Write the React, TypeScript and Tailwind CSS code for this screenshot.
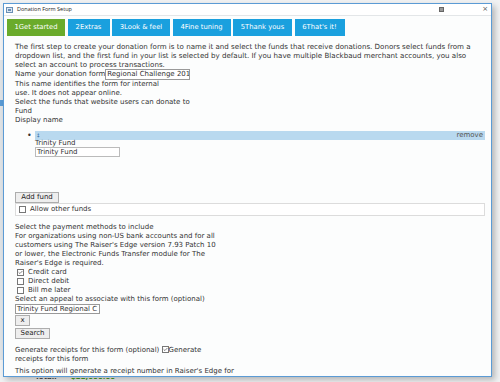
import { Check } from "lucide-react";

const tabs = [
  { label: "1Get started", w: "w-[58px]", active: true },
  { label: "2Extras", w: "w-[42px]" },
  { label: "3Look & feel", w: "w-[58px]" },
  { label: "4Fine tuning", w: "w-[58px]" },
  { label: "5Thank yous", w: "w-[59px]" },
  { label: "6That's it!", w: "w-[50px]" },
];

function Box({ checked }: { checked?: boolean }) {
  return (
    <span className="inline-flex h-[7px] w-[7px] shrink-0 items-center justify-center border border-[#777] bg-white">
      {checked && <Check size={7} strokeWidth={3} className="text-[#333]" />}
    </span>
  );
}

function Btn({ children, w }: { children: string; w: string }) {
  return (
    <div className={`flex h-[11px] ${w} items-center justify-center border border-[#adadad] bg-[#eeeeee] text-[#222]`}>
      {children}
    </div>
  );
}

export default function App() {
  return (
    <div className="relative h-[382px] w-[500px] overflow-hidden bg-[#f1f2f3] font-['DejaVu_Sans',sans-serif]">
      {/* page behind the dialog */}
      <div className="absolute left-0 top-[60px] h-[300px] w-[3px] bg-[#dfe3e6]" />
      <div className="absolute left-0 top-[100px] h-[6px] w-[3px] bg-[#5a9bd5]" />
      <div className="absolute left-0 top-[378px] flex h-[4px] w-[200px] overflow-hidden">
        <div className="-mt-[5px] flex gap-[14px] pl-[35px] text-[7px] font-bold leading-[9px]">
          <span className="text-[#444]">Total:</span>
          <span className="text-[#4a9a22]">$22,000.00</span>
        </div>
      </div>

      {/* dialog */}
      <div className="absolute left-[3px] top-[3px] flex h-[374px] w-[489px] flex-col border border-[#5b9bd5] bg-[#fcfdfd] shadow-[3px_3px_6px_rgba(0,0,0,0.25)]">
        <div className="flex h-[12px] shrink-0 items-center border-b border-[#e3e6e8] bg-white pl-[2px] pr-[3px]">
          <span className="mr-[4px] flex h-[6px] w-[7px] flex-col justify-between border border-[#6b8fb5] bg-[#dbe7f3] p-[1px]">
            <span className="h-px bg-[#6b8fb5]" />
            <span className="h-px bg-[#6b8fb5]" />
          </span>
          <span className="font-['Open_Sans',sans-serif] text-[5.5px] text-[#222]">Donation Form Setup</span>
          <span className="ml-auto mr-[38px] h-[5px] w-[5px] border border-[#666] bg-[#999]" />
          <span className="text-[7px] leading-none text-[#555]">×</span>
        </div>

        <div className="flex-1 overflow-hidden pl-[3px] text-[7px] leading-[9px] text-[#333]">
          <div className="mt-[3px] flex gap-[2.5px]">
            {tabs.map((t) => (
              <div
                key={t.label}
                className={`flex h-[17px] ${t.w} items-center justify-center text-[6.8px] text-white ${t.active ? "bg-[#6aab2b]" : "bg-[#1aa0de]"}`}
              >
                {t.label}
              </div>
            ))}
          </div>

          <div className="pl-[8px] pr-[6px]">
            <p className="mt-[6px] w-[456px] text-[7.1px]">
              The first step to create your donation form is to name it and select the funds that receive donations. Donors select funds from a dropdown list, and the first fund in your list is selected by default. If you have multiple Blackbaud merchant accounts, you also select an account to process transactions.
            </p>
            <div className="flex items-center">
              <span>Name your donation form</span>
              <span className="flex h-[11px] w-[85px] items-center overflow-hidden whitespace-nowrap border border-[#999] bg-white pl-[1px]">Regional Challenge 201</span>
            </div>
            <p className="w-[150px]">This name identifies the form for internal use. It does not appear online.</p>
            <div>Select the funds that website users can donate to</div>
            <div>Fund</div>
            <div>Display name</div>

            <div className="mt-[6px] flex items-center">
              <span className="w-[20px] pl-[12px] text-[8px]">•</span>
              <div className="flex h-[9px] flex-1 items-center justify-between bg-[#b9d9ef] pl-[2px] pr-[2px] text-[#555]">
                <span className="text-[5px] text-[#2b5f9a]">‡</span>
                <span>remove</span>
              </div>
            </div>
            <div className="pl-[20px]">
              <div className="-mt-[1px] leading-[8px]">Trinity Fund</div>
              <div className="flex h-[10px] w-[85px] items-center border border-[#bbb] bg-white pl-[1px]">Trinity Fund</div>
            </div>

            <div className="mt-[35px]">
              <Btn w="w-[44px]">Add fund</Btn>
            </div>
            <div className="flex h-[13px] items-center gap-[4px] border border-[#dcdcdc] bg-white pl-[3px]">
              <Box />
              <span>Allow other funds</span>
            </div>

            <div className="mt-[7px]">Select the payment methods to include</div>
            <p className="w-[210px]">
              For organizations using non-US bank accounts and for all customers using The Raiser's Edge version 7.93 Patch 10 or lower, the Electronic Funds Transfer module for The Raiser's Edge is required.
            </p>
            <div className="flex items-center gap-[4px] pl-[2px]"><Box checked /><span>Credit card</span></div>
            <div className="flex items-center gap-[4px] pl-[2px]"><Box /><span>Direct debit</span></div>
            <div className="flex items-center gap-[4px] pl-[2px]"><Box /><span>Bill me later</span></div>
            <div>Select an appeal to associate with this form (optional)</div>
            <div className="flex h-[10px] w-[85px] items-center overflow-hidden whitespace-nowrap border border-[#999] bg-white pl-[1px]">Trinity Fund Regional C</div>
            <div className="mt-[1px]"><Btn w="w-[15px]">x</Btn></div>
            <div className="mt-[2px]"><Btn w="w-[35px]">Search</Btn></div>

            <div className="mt-[6px] w-[215px]">
              Generate receipts for this form (optional){" "}
              <span className="inline-flex translate-y-[1px]"><Box checked /></span>Generate receipts for this form
            </div>
            <p className="mt-[3px] w-[230px]">
              This option will generate a receipt number in Raiser's Edge for each transaction on this form. To include the receipt number in the acknowledgement email, add it to the email.
            </p>
          </div>
        </div>
      </div>
    </div>
  );
}
